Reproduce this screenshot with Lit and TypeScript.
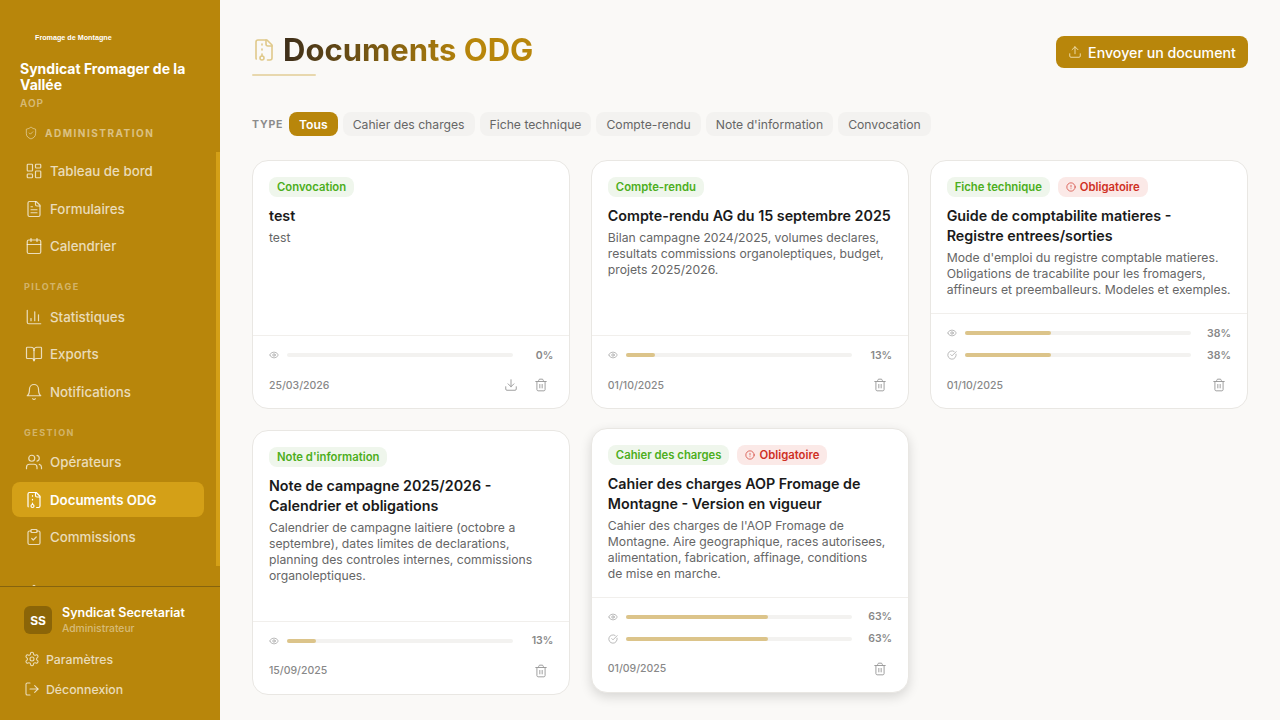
import { LitElement, html, css, svg } from "lit";
import { customElement } from "lit/decorators.js";
import { classMap } from "lit/directives/class-map.js";

const ICONS: Record<string, unknown> = {
  shield: svg`<path d="M20 13c0 5-3.5 7.5-7.66 8.95a1 1 0 0 1-.67-.01C7.5 20.5 4 18 4 13V6a1 1 0 0 1 1-1c2 0 4.5-1.2 6.24-2.72a1.17 1.17 0 0 1 1.52 0C14.51 3.81 17 5 19 5a1 1 0 0 1 1 1z"/><path d="m9 12 2 2 4-4"/>`,
  dashboard: svg`<rect x="3" y="3" width="7" height="9" rx="1"/><rect x="14" y="3" width="7" height="5" rx="1"/><rect x="14" y="12" width="7" height="9" rx="1"/><rect x="3" y="16" width="7" height="5" rx="1"/>`,
  file: svg`<path d="M15 2H6a2 2 0 0 0-2 2v16a2 2 0 0 0 2 2h12a2 2 0 0 0 2-2V7Z"/><path d="M14 2v4a2 2 0 0 0 2 2h4"/><path d="M10 9H8"/><path d="M16 13H8"/><path d="M16 17H8"/>`,
  calendar: svg`<path d="M8 2v4"/><path d="M16 2v4"/><rect x="3" y="4" width="18" height="18" rx="2"/><path d="M3 10h18"/>`,
  chart: svg`<path d="M3 3v16a2 2 0 0 0 2 2h16"/><path d="M18 17V9"/><path d="M13 17V5"/><path d="M8 17v-3"/>`,
  book: svg`<path d="M12 7v14"/><path d="M3 18a1 1 0 0 1-1-1V4a1 1 0 0 1 1-1h5a4 4 0 0 1 4 4 4 4 0 0 1 4-4h5a1 1 0 0 1 1 1v13a1 1 0 0 1-1 1h-6a3 3 0 0 0-3 3 3 3 0 0 0-3-3z"/>`,
  bell: svg`<path d="M6 8a6 6 0 0 1 12 0c0 7 3 9 3 9H3s3-2 3-9"/><path d="M10.3 21a1.94 1.94 0 0 0 3.4 0"/>`,
  users: svg`<path d="M16 21v-2a4 4 0 0 0-4-4H6a4 4 0 0 0-4 4v2"/><circle cx="9" cy="7" r="4"/><path d="M22 21v-2a4 4 0 0 0-3-3.87"/><path d="M16 3.13a4 4 0 0 1 0 7.75"/>`,
  archive: svg`<path d="M10 12v-1"/><path d="M10 18v-2"/><path d="M10 7V6"/><path d="M14 2v4a2 2 0 0 0 2 2h4"/><path d="M15.5 22H18a2 2 0 0 0 2-2V7l-5-5H6a2 2 0 0 0-2 2v16a2 2 0 0 0 .274 1.01"/><circle cx="10" cy="20" r="2"/>`,
  clipboard: svg`<rect x="8" y="2" width="8" height="4" rx="1"/><path d="M16 4h2a2 2 0 0 1 2 2v14a2 2 0 0 1-2 2H6a2 2 0 0 1-2-2V6a2 2 0 0 1 2-2h2"/><path d="m9 14 2 2 4-4"/>`,
  settings: svg`<path d="M12.22 2h-.44a2 2 0 0 0-2 2v.18a2 2 0 0 1-1 1.73l-.43.25a2 2 0 0 1-2 0l-.15-.08a2 2 0 0 0-2.73.73l-.22.38a2 2 0 0 0 .73 2.73l.15.1a2 2 0 0 1 1 1.72v.51a2 2 0 0 1-1 1.74l-.15.09a2 2 0 0 0-.73 2.73l.22.38a2 2 0 0 0 2.73.73l.15-.08a2 2 0 0 1 2 0l.43.25a2 2 0 0 1 1 1.73V20a2 2 0 0 0 2 2h.44a2 2 0 0 0 2-2v-.18a2 2 0 0 1 1-1.73l.43-.25a2 2 0 0 1 2 0l.15.08a2 2 0 0 0 2.73-.73l.22-.39a2 2 0 0 0-.73-2.73l-.15-.08a2 2 0 0 1-1-1.74v-.5a2 2 0 0 1 1-1.74l.15-.09a2 2 0 0 0 .73-2.73l-.22-.38a2 2 0 0 0-2.73-.73l-.15.08a2 2 0 0 1-2 0l-.43-.25a2 2 0 0 1-1-1.73V4a2 2 0 0 0-2-2z"/><circle cx="12" cy="12" r="3"/>`,
  logout: svg`<path d="M9 21H5a2 2 0 0 1-2-2V5a2 2 0 0 1 2-2h4"/><path d="m16 17 5-5-5-5"/><path d="M21 12H9"/>`,
  upload: svg`<path d="M21 15v4a2 2 0 0 1-2 2H5a2 2 0 0 1-2-2v-4"/><path d="m17 8-5-5-5 5"/><path d="M12 3v12"/>`,
  download: svg`<path d="M21 15v4a2 2 0 0 1-2 2H5a2 2 0 0 1-2-2v-4"/><path d="m7 10 5 5 5-5"/><path d="M12 15V3"/>`,
  trash: svg`<path d="M3 6h18"/><path d="M19 6v14c0 1-1 2-2 2H7c-1 0-2-1-2-2V6"/><path d="M8 6V4c0-1 1-2 2-2h4c1 0 2 1 2 2v2"/><path d="M10 11v6"/><path d="M14 11v6"/>`,
  eye: svg`<path d="M2.062 12.348a1 1 0 0 1 0-.696 10.75 10.75 0 0 1 19.876 0 1 1 0 0 1 0 .696 10.75 10.75 0 0 1-19.876 0"/><circle cx="12" cy="12" r="3"/>`,
  check: svg`<path d="M21.801 10A10 10 0 1 1 17 3.335"/><path d="m9 11 3 3L22 4"/>`,
  alert: svg`<circle cx="12" cy="12" r="10"/><path d="M12 8v4"/><path d="M12 16h.01"/>`,
};

function icon(name: string, size: number) {
  return html`<svg
    class="icon"
    width=${size}
    height=${size}
    viewBox="0 0 24 24"
    fill="none"
    stroke="currentColor"
    stroke-width="1.6"
    stroke-linecap="round"
    stroke-linejoin="round"
  >
    ${ICONS[name]}
  </svg>`;
}

interface NavSection {
  label?: string;
  withIcon?: boolean;
  items: { icon: string; text: string; active?: boolean }[];
}

const NAV: NavSection[] = [
  {
    label: "ADMINISTRATION",
    withIcon: true,
    items: [
      { icon: "dashboard", text: "Tableau de bord" },
      { icon: "file", text: "Formulaires" },
      { icon: "calendar", text: "Calendrier" },
    ],
  },
  {
    label: "PILOTAGE",
    items: [
      { icon: "chart", text: "Statistiques" },
      { icon: "book", text: "Exports" },
      { icon: "bell", text: "Notifications" },
    ],
  },
  {
    label: "GESTION",
    items: [
      { icon: "users", text: "Opérateurs" },
      { icon: "archive", text: "Documents ODG", active: true },
      { icon: "clipboard", text: "Commissions" },
    ],
  },
  // cut off by the user block, as in the scrolled sidebar
  { items: [{ icon: "shield", text: "Notifications" }] },
];

const FILTERS = [
  "Tous",
  "Cahier des charges",
  "Fiche technique",
  "Compte-rendu",
  "Note d'information",
  "Convocation",
];

interface Doc {
  type: string;
  required?: boolean;
  title: string;
  desc: string;
  read: number;
  ack?: number;
  date: string;
  download?: boolean;
  hover?: boolean;
}

const DOCS: Doc[] = [
  { type: "Convocation", title: "test", desc: "test", read: 0, date: "25/03/2026", download: true },
  {
    type: "Compte-rendu",
    title: "Compte-rendu AG du 15 septembre 2025",
    desc: "Bilan campagne 2024/2025, volumes declares, resultats commissions organoleptiques, budget, projets 2025/2026.",
    read: 13,
    date: "01/10/2025",
  },
  {
    type: "Fiche technique",
    required: true,
    title: "Guide de comptabilite matieres - Registre\u00a0entrees/sorties",
    desc: "Mode d'emploi du registre comptable matieres. Obligations de tracabilite pour les fromagers, affineurs et preemballeurs. Modeles et exemples.",
    read: 38,
    ack: 38,
    date: "01/10/2025",
  },
  {
    type: "Note d'information",
    title: "Note de campagne 2025/2026 - Calendrier et obligations",
    desc: "Calendrier de campagne laitiere (octobre a septembre), dates limites de declarations, planning des controles internes, commissions organoleptiques.",
    read: 13,
    date: "15/09/2025",
  },
  {
    type: "Cahier des charges",
    required: true,
    title: "Cahier des charges AOP Fromage de Montagne - Version en vigueur",
    desc: "Cahier des charges de l'AOP Fromage de Montagne. Aire geographique, races autorisees, alimentation, fabrication, affinage, conditions de\u00a0mise en marche.",
    read: 63,
    ack: 63,
    date: "01/09/2025",
    hover: true,
  },
];

@customElement("app-root")
export class AppRoot extends LitElement {
  renderNav() {
    return NAV.map(
      (section) => html`
        <div class="section">
          ${section.label
            ? html`<div class=${classMap({ label: true, first: !!section.withIcon })}>
                ${section.withIcon ? icon("shield", 14) : ""}${section.label}
              </div>`
            : ""}
          ${section.items.map(
            (item) => html`
              <a class=${classMap({ item: true, active: !!item.active })}>
                ${icon(item.icon, 18)}<span>${item.text}</span>
              </a>
            `
          )}
        </div>
      `
    );
  }

  renderBar(name: string, value: number) {
    return html`<div class="bar-row">
      ${icon(name, 10)}
      <div class="track"><div class="fill" style="width:${value}%"></div></div>
      <span class="pct">${value}%</span>
    </div>`;
  }

  renderDoc(doc: Doc) {
    return html`<article class=${classMap({ card: true, hover: !!doc.hover })}>
      <div class="body">
        <div class="tags">
          <span class="tag type">${doc.type}</span>
          ${doc.required
            ? html`<span class="tag required">${icon("alert", 10)}Obligatoire</span>`
            : ""}
        </div>
        <h3>${doc.title}</h3>
        <p>${doc.desc}</p>
      </div>
      <div class="foot">
        <div class="bars">
          ${this.renderBar("eye", doc.read)}
          ${doc.ack !== undefined ? this.renderBar("check", doc.ack) : ""}
        </div>
        <div class="meta">
          <span class="date">${doc.date}</span>
          <div class="actions">
            ${doc.download ? icon("download", 14) : ""}${icon("trash", 14)}
          </div>
        </div>
      </div>
    </article>`;
  }

  render() {
    return html`
      <aside>
        <div class="brand">
          <div class="logo">Fromage de Montagne</div>
          <div class="org">Syndicat Fromager de la Vallée</div>
          <div class="aop">AOP</div>
        </div>
        <nav>${this.renderNav()}</nav>
        <div class="thumb"></div>
        <div class="user">
          <div class="who">
            <div class="avatar">SS</div>
            <div>
              <div class="name">Syndicat Secretariat</div>
              <div class="role">Administrateur</div>
            </div>
          </div>
          <a class="link">${icon("settings", 16)}Paramètres</a>
          <a class="link">${icon("logout", 16)}Déconnexion</a>
        </div>
      </aside>
      <main>
        <header>
          <div>
            <div class="heading">
              <span class="h-icon">${icon("archive", 24)}</span>
              <h1>Documents ODG</h1>
            </div>
            <div class="rule"></div>
          </div>
          <button class="send">${icon("upload", 14)}Envoyer un document</button>
        </header>
        <div class="filters">
          <span class="f-label">TYPE</span>
          ${FILTERS.map(
            (f, i) => html`<button class=${classMap({ pill: true, on: i === 0 })}>${f}</button>`
          )}
        </div>
        <section class="grid">${DOCS.map((d) => this.renderDoc(d))}</section>
      </main>
    `;
  }

  static styles = css`
    :host {
      display: flex;
      width: 1280px;
      height: 720px;
      overflow: hidden;
      background: #faf9f7;
      font-family: Inter, "Noto Sans", sans-serif;
      color: #1a1a1a;
    }

    .icon {
      flex: none;
      display: block;
    }

    aside {
      position: relative;
      width: 220px;
      flex: none;
      height: 720px;
      display: flex;
      flex-direction: column;
      background: #b8860b;
      color: #fff;
    }

    .brand {
      padding: 33px 20px 0;
    }

    .logo {
      font-family: "Liberation Sans", sans-serif;
      font-size: 7.2px;
      font-weight: 700;
      line-height: 9px;
      padding-left: 15px;
    }

    .org {
      margin-top: 19px;
      font-size: 14px;
      font-weight: 700;
      line-height: 16px;
    }

    .aop {
      margin-top: 4px;
      font-size: 10px;
      font-weight: 600;
      line-height: 12px;
      letter-spacing: 1px;
      color: rgba(255, 255, 255, 0.45);
    }

    nav {
      flex: 1;
      min-height: 0;
      overflow: hidden;
      padding: 0 16px 0 12px;
    }

    .section {
      display: flex;
      flex-direction: column;
      gap: 2.5px;
      margin-bottom: 7px;
    }

    .section:last-child {
      margin-top: 21px;
    }

    .label {
      display: flex;
      align-items: center;
      gap: 7px;
      height: 16px;
      padding: 8px 12px 0;
      margin-bottom: 2px;
      font-size: 9px;
      font-weight: 700;
      letter-spacing: 1.5px;
      color: rgba(255, 255, 255, 0.4);
    }

    .label.first {
      height: 20px;
      font-size: 10px;
      margin: 14px 0 8px;
      padding: 0 12px;
      color: rgba(255, 255, 255, 0.5);
    }

    .item {
      display: flex;
      align-items: center;
      gap: 7px;
      height: 35px;
      padding: 0 13px;
      border-radius: 8px;
      font-size: 13.3px;
      font-weight: 500;
      color: rgba(255, 255, 255, 0.72);
    }

    .item.active {
      background: #d4a017;
      color: #fff;
      font-weight: 600;
    }

    .thumb {
      position: absolute;
      top: 152px;
      right: 0;
      width: 4px;
      height: 414px;
      background: #d4a017;
    }

    .user {
      height: 134px;
      flex: none;
      box-sizing: border-box;
      border-top: 1px solid #86640f;
      padding: 18px 24px 0;
      background: #b8860b;
    }

    .who {
      display: flex;
      align-items: center;
      gap: 10px;
      margin-bottom: 9px;
    }

    .avatar {
      width: 28px;
      height: 28px;
      border-radius: 6px;
      background: #8b6508;
      display: flex;
      align-items: center;
      justify-content: center;
      font-size: 12px;
      font-weight: 700;
    }

    .name {
      font-size: 12.5px;
      font-weight: 600;
      line-height: 16px;
    }

    .role {
      font-size: 10.3px;
      font-weight: 500;
      line-height: 14px;
      color: rgba(255, 255, 255, 0.45);
    }

    .link {
      display: flex;
      align-items: center;
      gap: 6px;
      height: 30px;
      font-size: 12.3px;
      font-weight: 500;
      color: rgba(255, 255, 255, 0.72);
    }

    main {
      flex: 1;
      min-width: 0;
      box-sizing: border-box;
      padding: 32px;
    }

    header {
      display: flex;
      justify-content: space-between;
      align-items: flex-start;
    }

    .heading {
      display: flex;
      align-items: center;
      gap: 7px;
    }

    .h-icon {
      color: #e0c98a;
    }

    h1 {
      margin: 0;
      font-size: 31px;
      font-weight: 700;
      line-height: 36px;
      background: linear-gradient(90deg, #3d2e1a, #b8860b 75%);
      -webkit-background-clip: text;
      background-clip: text;
      color: transparent;
    }

    .rule {
      width: 64px;
      height: 2px;
      margin-top: 6px;
      border-radius: 1px;
      background: #e8d8ae;
    }

    .send {
      margin-top: 4px;
      height: 32px;
      width: 192px;
      display: flex;
      align-items: center;
      justify-content: center;
      gap: 6px;
      border: none;
      border-radius: 8px;
      background: #b8860b;
      color: #fff;
      font-family: inherit;
      font-size: 14.2px;
      font-weight: 500;
    }

    .send .icon {
      color: #f0dfb0;
    }

    .filters {
      display: flex;
      align-items: center;
      gap: 5px;
      margin-top: 36px;
    }

    .f-label {
      width: 32px;
      font-size: 10.5px;
      font-weight: 700;
      letter-spacing: 0.8px;
      color: #8c8c8c;
    }

    .pill {
      height: 24px;
      padding: 0 10px;
      border: none;
      border-radius: 8px;
      background: #f3f2f0;
      color: #666;
      font-family: inherit;
      font-size: 12.2px;
      font-weight: 400;
    }

    .pill.on {
      background: #b8860b;
      color: #fff;
      font-weight: 600;
    }

    .grid {
      display: grid;
      grid-template-columns: repeat(3, 1fr);
      gap: 20.5px 20.5px;
      margin-top: 24px;
    }

    .card {
      display: flex;
      flex-direction: column;
      background: #fff;
      border: 1px solid #e9e7e3;
      border-radius: 16px;
      overflow: hidden;
    }

    .card.hover {
      transform: translateY(-2px);
      box-shadow: 0 4px 12px rgba(0, 0, 0, 0.14);
    }

    .body {
      flex: 1;
      padding: 16px 16px 15px;
    }

    .tags {
      display: flex;
      gap: 8px;
      margin-bottom: 9px;
    }

    .tag {
      display: flex;
      align-items: center;
      gap: 4px;
      height: 20px;
      padding: 0 8px;
      border-radius: 8px;
      font-size: 11.3px;
      font-weight: 600;
    }

    .type {
      background: #eff6ec;
      color: #4cae20;
    }

    .required {
      background: #fbe9e7;
      color: #cf3024;
    }

    h3 {
      margin: 0 0 4px;
      font-size: 14.3px;
      font-weight: 600;
      line-height: 20px;
      color: #1a1a1a;
    }

    p {
      margin: 0;
      font-size: 12.2px;
      line-height: 16px;
      color: #666;
    }

    .foot {
      border-top: 1px solid #f1efec;
      padding: 12px 16px 9px;
    }

    .bars {
      display: flex;
      flex-direction: column;
      gap: 8px;
    }

    .bar-row {
      display: flex;
      align-items: center;
      height: 14px;
      color: #999;
    }

    .track {
      flex: 1;
      height: 4px;
      margin: 0 16px 0 8px;
      border-radius: 2px;
      background: #f3f2f0;
    }

    .fill {
      height: 100%;
      border-radius: 2px;
      background: #dcc48a;
    }

    .pct {
      font-size: 10.5px;
      font-weight: 600;
      color: #888;
      width: 24px;
      text-align: right;
    }

    .meta {
      display: flex;
      justify-content: space-between;
      align-items: center;
      margin-top: 9px;
      height: 28px;
    }

    .date {
      font-size: 10.5px;
      font-weight: 500;
      color: #888;
    }

    .actions {
      display: flex;
      gap: 16px;
      padding-right: 5px;
      color: #999;
    }
  `;
}
